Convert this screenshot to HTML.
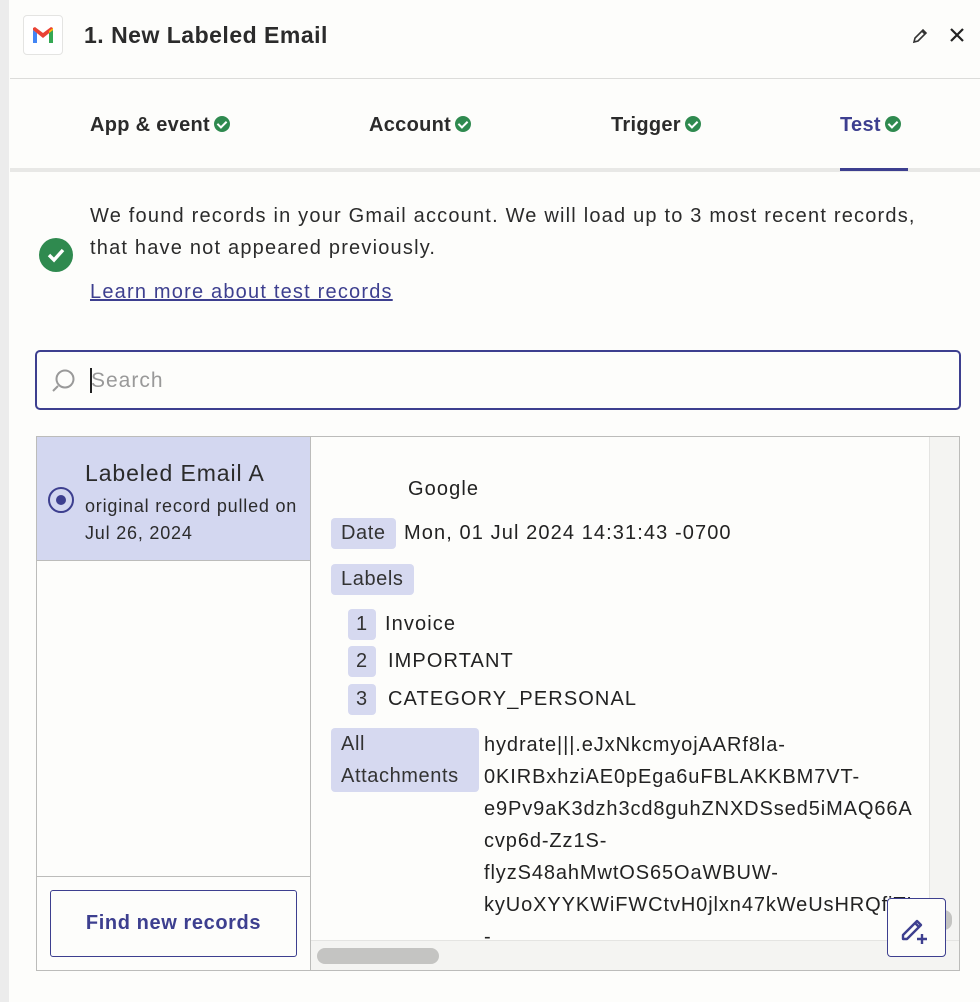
<!DOCTYPE html>
<html><head><meta charset="utf-8"><style>
*{box-sizing:border-box;margin:0;padding:0}
body{width:980px;height:1002px;background:#fdfdfb;font-family:"Liberation Sans",sans-serif;color:#2b2b2b;position:relative;overflow:hidden}
.a{position:absolute;white-space:nowrap}
.chk{display:inline-block;width:16px;height:16px;border-radius:50%;background:#2f8a4f;vertical-align:-1px;margin-left:4px;position:relative}
.chk:after{content:"";position:absolute;left:5px;top:3px;width:4px;height:7px;border:solid #fff;border-width:0 2px 2px 0;transform:rotate(45deg)}
.tab{font-size:20px;font-weight:bold;top:114px;letter-spacing:0.3px}
.tag{position:absolute;background:#d6d9f0;border-radius:4px;font-size:20px;color:#333;padding:0 10px;height:31px;line-height:31px;letter-spacing:0.6px}
.v{position:absolute;font-size:20px;color:#222;white-space:nowrap;letter-spacing:1.1px}
</style></head><body>
<div class="a" style="left:0;top:0;width:9px;height:1002px;background:#ececec"></div>
<div class="a" style="left:23px;top:15px;width:40px;height:40px;border:1px solid #e4e4e2;border-radius:4px;background:#fff"></div>
<svg class="a" style="left:31px;top:26px" width="24" height="18" viewBox="0 0 24 18"><path d="M2 4v13h4V7z" fill="#4285f4"/><path d="M18 7v10h4V4z" fill="#34a853"/><path d="M2 4l10 8 10-8v-2l-2-1-8 6-8-6-2 1z" fill="#ea4335"/><path d="M18 7l4-3V2l-4 3z" fill="#fbbc04"/></svg>
<div class="a" style="left:84px;top:22px;font-size:23px;font-weight:bold;color:#2b2b2b;letter-spacing:0.5px">1. New Labeled Email</div>
<svg class="a" style="left:911px;top:27px" width="18" height="18" viewBox="0 0 18 18"><path d="M3 15l1-4 8-8 3 3-8 8z M11 4l3 3" fill="none" stroke="#333" stroke-width="1.6"/></svg>
<svg class="a" style="left:948px;top:26px" width="18" height="18" viewBox="0 0 18 18"><path d="M3 3l12 12M15 3L3 15" stroke="#222" stroke-width="2.2"/></svg>
<div class="a" style="left:10px;top:78px;width:970px;height:1px;background:#dcdcda"></div>
<div class="a tab" style="left:90px">App &amp; event<span class="chk"></span></div>
<div class="a tab" style="left:369px">Account<span class="chk"></span></div>
<div class="a tab" style="left:611px">Trigger<span class="chk"></span></div>
<div class="a tab" style="left:840px;color:#3d3f8f">Test<span class="chk"></span></div>
<div class="a" style="left:10px;top:168px;width:970px;height:4px;background:#e8e8e6"></div>
<div class="a" style="left:840px;top:168px;width:68px;height:3px;background:#3d3f8f"></div>
<div class="a" style="left:39px;top:238px;width:34px;height:34px;border-radius:50%;background:#2f8a4f"></div>
<svg class="a" style="left:39px;top:238px" width="34" height="34"><path d="M10 17l5 5 9-10" fill="none" stroke="#fff" stroke-width="3.4"/></svg>
<div class="a" style="left:90px;top:200px;font-size:20px;line-height:32px;color:#2b2b2b;letter-spacing:1.2px">We found records in your Gmail account. We will load up to 3 most recent records,<br>that have not appeared previously.</div>
<div class="a" style="left:90px;top:281px;font-size:20px;color:#3d3f8f;text-decoration:underline;letter-spacing:1.2px">Learn more about test records</div>
<div class="a" style="left:35px;top:350px;width:926px;height:60px;border:2px solid #3d3f8f;border-radius:5px"></div>
<svg class="a" style="left:50px;top:367px" width="28" height="28"><circle cx="15" cy="12" r="8.5" fill="none" stroke="#999" stroke-width="2"/><path d="M8 19l-5 5" stroke="#999" stroke-width="2"/></svg>
<div class="a" style="left:90px;top:368px;width:2px;height:25px;background:#222"></div>
<div class="a" style="left:91px;top:369px;font-size:21px;color:#999;letter-spacing:1px">Search</div>
<div class="a" style="left:36px;top:436px;width:924px;height:535px;border:1px solid #bcbcba"></div>
<div class="a" style="left:37px;top:437px;width:273px;height:123px;background:#d3d7f0"></div>
<div class="a" style="left:310px;top:437px;width:1px;height:533px;background:#bcbcba"></div>
<div class="a" style="left:37px;top:560px;width:273px;height:1px;background:#bcbcba"></div>
<div class="a" style="left:37px;top:876px;width:273px;height:1px;background:#bcbcba"></div>
<div class="a" style="left:48px;top:487px;width:26px;height:26px;border-radius:50%;border:2.5px solid #3d3f8f"></div>
<div class="a" style="left:56px;top:495px;width:10px;height:10px;border-radius:50%;background:#3d3f8f"></div>
<div class="a" style="left:85px;top:460px;font-size:23px;color:#2b2b2b;letter-spacing:0.9px">Labeled Email A</div>
<div class="a" style="left:85px;top:493px;font-size:18px;line-height:27px;color:#2b2b2b;letter-spacing:0.8px">original record pulled on<br>Jul 26, 2024</div>
<div class="a" style="left:50px;top:890px;width:247px;height:67px;border:1px solid #3d3f8f;border-radius:3px;text-align:center;line-height:65px;font-size:20px;font-weight:bold;color:#3d3f8f;letter-spacing:0.6px">Find new records</div>
<div class="a" style="left:929px;top:437px;width:30px;height:503px;background:#f4f4f2;border-left:1px solid #e4e4e2"></div>
<div class="a" style="left:311px;top:940px;width:648px;height:30px;background:#f4f4f2;border-top:1px solid #e4e4e2"></div>
<div class="a" style="left:317px;top:948px;width:122px;height:16px;border-radius:8px;background:#c4c4c2"></div>
<div class="a" style="left:936px;top:910px;width:16px;height:20px;border-radius:8px;background:#c4c4c2"></div>
<div class="v" style="left:408px;top:478px">Google</div>
<div class="tag" style="left:331px;top:518px">Date</div><div class="v" style="left:404px;top:522px">Mon, 01 Jul 2024 14:31:43 -0700</div>
<div class="tag" style="left:331px;top:564px">Labels</div>
<div class="tag" style="left:348px;top:609px;padding:0 8px">1</div><div class="v" style="left:385px;top:613px">Invoice</div>
<div class="tag" style="left:348px;top:646px;padding:0 8px">2</div><div class="v" style="left:388px;top:650px">IMPORTANT</div>
<div class="tag" style="left:348px;top:684px;padding:0 8px">3</div><div class="v" style="left:388px;top:688px">CATEGORY_PERSONAL</div>
<div class="tag" style="left:331px;top:728px;height:64px;line-height:32px;width:148px">All<br>Attachments</div>
<div class="a" style="left:484px;top:729px;width:445px;height:211px;overflow:hidden;font-size:20px;line-height:32px;color:#222;letter-spacing:0.9px">hydrate|||.eJxNkcmyojAARf8la-<br>0KIRBxhziAE0pEga6uFBLAKKBM7VT-<br>e9Pv9aK3dzh3cd8guhZNXDSsed5iMAQ66A<br>cvp6d-Zz1S-<br>flyzS48ahMwtOS65OaWBUW-<br>kyUoXYYKWiFWCtvH0jlxn47kWeUsHRQfiTL<br>-</div>
<div class="a" style="left:887px;top:898px;width:59px;height:59px;border:1px solid #3d3f8f;border-radius:4px;background:#fdfdfb"></div>
<svg class="a" style="left:899px;top:910px" width="36" height="36" viewBox="0 0 36 36"><path d="M4 25l14-14 4 4-14 14H4z M16 13l4 4" fill="none" stroke="#3d3f8f" stroke-width="2.4" stroke-linejoin="round"/><path d="M23 24v10M18 29h10" stroke="#3d3f8f" stroke-width="2.4"/></svg>
</body></html>
